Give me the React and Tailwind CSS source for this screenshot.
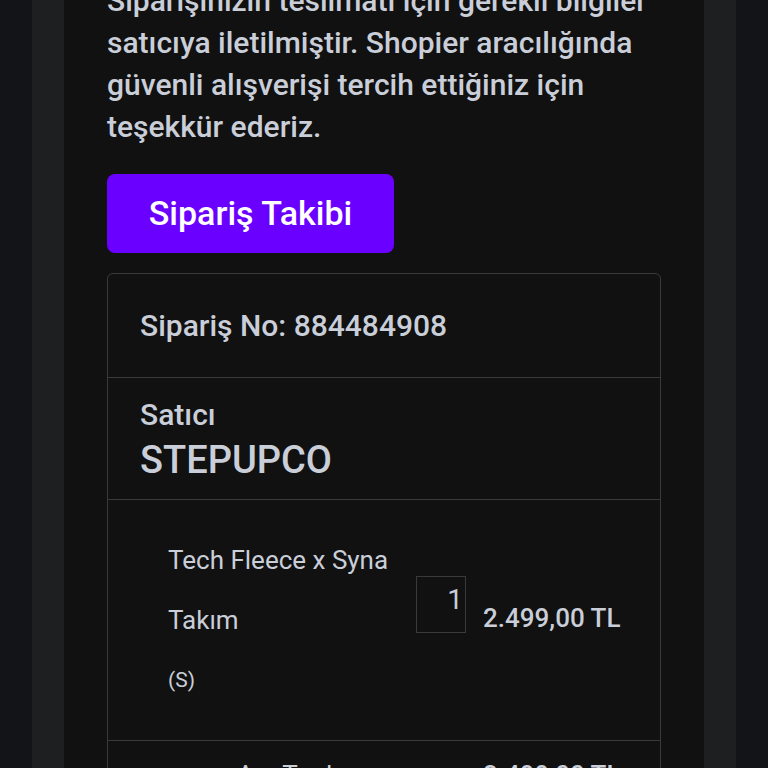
export default function App() {
  const font = { fontFamily: "Roboto, 'Liberation Sans', sans-serif" };
  return (
    <div
      className="h-[768px] w-[768px] overflow-hidden bg-[#131417] px-8 text-[#c9ced8]"
      style={font}
    >
      <div className="h-full bg-[#1e1f20] px-8">
        <div className="h-full overflow-hidden bg-[#111111] px-[43px]">
          <p className="-mt-[20px] text-[30px] font-medium leading-[42px]">
            Siparişinizin teslimatı için gerekli bilgiler satıcıya iletilmiştir. Shopier aracılığında
            güvenli alışverişi tercih ettiğiniz için teşekkür ederiz.
          </p>

          <button className="mt-[26px] flex h-[79px] w-[287px] items-center justify-center rounded-lg bg-[#6a00ff] text-[34px] font-medium text-white">
            Sipariş Takibi
          </button>

          <div className="mt-[20px] w-[554px] rounded-md border border-[#3a3a3a]">
            <div className="flex h-[104px] items-center border-b border-[#3a3a3a] px-8 text-[30px] font-medium">
              Sipariş No: 884484908
            </div>

            <div className="h-[122px] border-b border-[#3a3a3a] px-8 pt-[19px]">
              <div className="text-[30px] font-medium leading-[36px]">Satıcı</div>
              <div className="mt-[4px] text-[38px] font-medium leading-[46px]">STEPUPCO</div>
            </div>

            <div className="flex h-[241px] items-center border-b border-[#3a3a3a] pl-[60px]">
              <div className="w-[248px] text-[26px] leading-[60px]">
                <div>Tech Fleece x Syna</div>
                <div>Takım</div>
                <div className="text-[21px]">(S)</div>
              </div>
              <div className="mt-[76px] flex items-end self-start">
                <div className="flex h-[57px] w-[50px] items-start justify-end border border-[#3a3a3a] pr-[2px] pt-[8px] text-[28px] leading-[30px]">
                  1
                </div>
                <div className="ml-[17px] text-[26px] font-medium leading-[30px]">2.499,00 TL</div>
              </div>
            </div>

            <div className="flex h-[80px] items-start pl-[129px] pt-[19px]">
              <div className="w-[246px] text-[26px] leading-[30px]">Ara Toplam</div>
              <div className="text-[26px] font-medium leading-[30px]">2.499,00 TL</div>
            </div>
          </div>
        </div>
      </div>
    </div>
  );
}
